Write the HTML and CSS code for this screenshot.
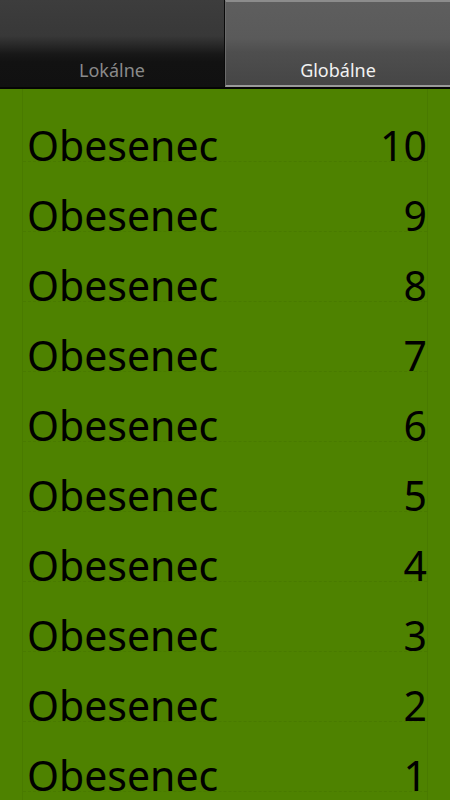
FILE: index.html
```html
<!DOCTYPE html>
<html lang="sk">
<head>
<meta charset="utf-8">
<title>Obesenec</title>
<link rel="stylesheet" href="styles.css">
</head>
<body>
<div class="screen">
  <div class="tabs">
    <div class="tab">Lokálne</div>
    <div class="tab tab-active">Globálne</div>
  </div>
  <div class="list">
    <div class="row"><span class="name">Obesenec</span><span class="score">10</span></div>
    <div class="row"><span class="name">Obesenec</span><span class="score">9</span></div>
    <div class="row"><span class="name">Obesenec</span><span class="score">8</span></div>
    <div class="row"><span class="name">Obesenec</span><span class="score">7</span></div>
    <div class="row"><span class="name">Obesenec</span><span class="score">6</span></div>
    <div class="row"><span class="name">Obesenec</span><span class="score">5</span></div>
    <div class="row"><span class="name">Obesenec</span><span class="score">4</span></div>
    <div class="row"><span class="name">Obesenec</span><span class="score">3</span></div>
    <div class="row"><span class="name">Obesenec</span><span class="score">2</span></div>
    <div class="row"><span class="name">Obesenec</span><span class="score">1</span></div>
  </div>
</div>
</body>
</html>
```
FILE: styles.css
```css
html, body {
  margin: 0;
  padding: 0;
  background: #4e8200;
}
body {
  font-family: "Noto Sans", "DejaVu Sans", sans-serif;
  width: 450px;
  height: 800px;
  overflow: hidden;
}
.screen {
  display: flex;
  flex-direction: column;
  height: 800px;
  background: #4e8200;
}
.tabs {
  display: flex;
  height: 89px;
  background: #000;
  box-sizing: border-box;
  border-bottom: 2px solid #050505;
}
.tab {
  flex: 0 0 225px;
  display: flex;
  align-items: flex-end;
  justify-content: center;
  box-sizing: border-box;
  padding-bottom: 6px;
  font-size: 18px;
  line-height: 22px;
  color: #8a8a8a;
  background: linear-gradient(to bottom, #3d3d3d 0px, #383838 36px, #2a2a2a 44px, #181818 54px, #121212 62px, #111111 87px);
  border-right: 1px solid #0a0a0a;
}
.tab-active {
  flex: 1 1 auto;
  color: #f2f2f2;
  border-right: none;
  border-left: 1px solid #6a6a6a;
  border-top: 2px solid #8c8c8c;
  border-bottom: 2px solid #9a9a9a;
  padding-bottom: 4px;
  background: linear-gradient(to bottom, #5e5e5e 0px, #5a5a5a 36px, #4e4e4e 50px, #454545 85px);
}
.list {
  flex: 1 1 auto;
  margin: 0 22px;
  padding-top: 3px;
  border-left: 1px solid rgba(0, 0, 0, 0.06);
  border-right: 1px solid rgba(0, 0, 0, 0.06);
  overflow: hidden;
}
.row {
  display: flex;
  justify-content: space-between;
  height: 70px;
  box-sizing: border-box;
  padding: 37px 0 0 4px;
  border-bottom: 1px dashed rgba(0, 0, 0, 0.06);
  font-size: 41px;
  line-height: 32px;
  color: #000;
}
```
